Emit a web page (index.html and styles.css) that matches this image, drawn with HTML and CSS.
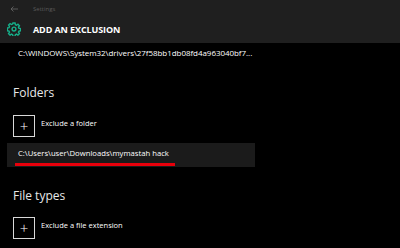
FILE: index.html
```html
<!DOCTYPE html>
<html lang="en">
<head>
    <meta charset="UTF-8">
    <meta name="viewport" content="width=device-width, initial-scale=1.0">
    <title>Settings</title>
    <link rel="stylesheet" href="styles.css">
</head>
<body>
    <div class="header">
        <div class="titlebar">
            <svg class="back" width="8" height="6" viewBox="0 0 8 6" fill="none" stroke="#6a6a6a" stroke-width="0.8">
                <path d="M8 3H1M3.5 0.5L1 3l2.5 2.5"></path>
            </svg>
            <span class="app-name">Settings</span>
        </div>
        <div class="page-title">
            <svg class="gear" width="14" height="14" viewBox="0 0 16 16" fill="none" stroke="#16b08a" stroke-width="1.6">
                <circle cx="8" cy="8" r="2.2"></circle>
                <path d="M6.8 1.2h2.4l.4 1.9 1.3.6 1.6-1.1 1.7 1.7-1.1 1.6.6 1.3 1.9.4v2.4l-1.9.4-.6 1.3 1.1 1.6-1.7 1.7-1.6-1.1-1.3.6-.4 1.9H6.8l-.4-1.9-1.3-.6-1.6 1.1-1.7-1.7 1.1-1.6-.6-1.3-1.9-.4V6.8l1.9-.4.6-1.3-1.1-1.6 1.7-1.7 1.6 1.1 1.3-.6z"></path>
            </svg>
            <span>ADD AN EXCLUSION</span>
        </div>
    </div>

    <div class="content">
        <div class="file-path">C:\WINDOWS\System32\drivers\27f58bb1db08fd4a963040bf7...</div>

        <h2>Folders</h2>
        <div class="add-row">
            <div class="plus-box">+</div>
            <span>Exclude a folder</span>
        </div>
        <div class="item selected">
            <span class="item-text">C:\Users\user\Downloads\mymastah hack</span>
            <div class="mark"></div>
        </div>

        <h2 class="types">File types</h2>
        <div class="add-row">
            <div class="plus-box">+</div>
            <span>Exclude a file extension</span>
        </div>
    </div>
</body>
</html>
```

FILE: styles.css
```css
body {
    font-family: 'Open Sans', 'Noto Sans', Arial, sans-serif;
    background-color: #000;
    color: #fff;
    margin: 0;
    padding: 0;
    width: 400px;
    height: 248px;
    overflow: hidden;
}

.header {
    background-color: #1f1f1f;
    height: 43px;
}

.titlebar {
    display: flex;
    align-items: center;
    height: 17px;
    font-size: 6px;
    color: #5a5a5a;
}

.back {
    margin-left: 10px;
}

.app-name {
    margin-left: 15px;
}

.page-title {
    display: flex;
    align-items: center;
    height: 24px;
    padding-left: 7px;
    font-size: 9px;
    font-weight: bold;
    letter-spacing: -0.1px;
}

.gear {
    margin-right: 12px;
}

.content {
    padding-left: 13px;
}

.file-path {
    font-size: 8px;
    padding: 4px 0 0 5px;
    height: 18px;
    letter-spacing: -0.05px;
}

h2 {
    font-size: 12px;
    font-weight: normal;
    color: #e8e8e8;
    margin: 0;
    padding-top: 19px;
    height: 36px;
    box-sizing: border-box;
}

.add-row {
    display: flex;
    align-items: flex-start;
    height: 23px;
    font-size: 7.5px;
    padding-top: 14px;
}

.plus-box {
    width: 20px;
    height: 20px;
    border: 1px solid #d8d8d8;
    display: flex;
    justify-content: center;
    align-items: center;
    font-size: 15px;
    font-weight: 300;
    line-height: 1;
    margin-right: 6px;
}

.add-row span {
    margin-top: 3px;
}

.item {
    position: relative;
    width: 248px;
    height: 24px;
    margin: 5px 0 0 -6px;
    background-color: #1b1b1b;
    font-size: 7.7px;
    display: flex;
    align-items: center;
}

.item-text {
    padding-left: 11px;
    margin-top: -4px;
}

.mark {
    position: absolute;
    left: 8px;
    top: 20px;
    width: 160px;
    height: 3px;
    background-color: #e8000b;
}

.types {
    padding-top: 20px;
}
```
